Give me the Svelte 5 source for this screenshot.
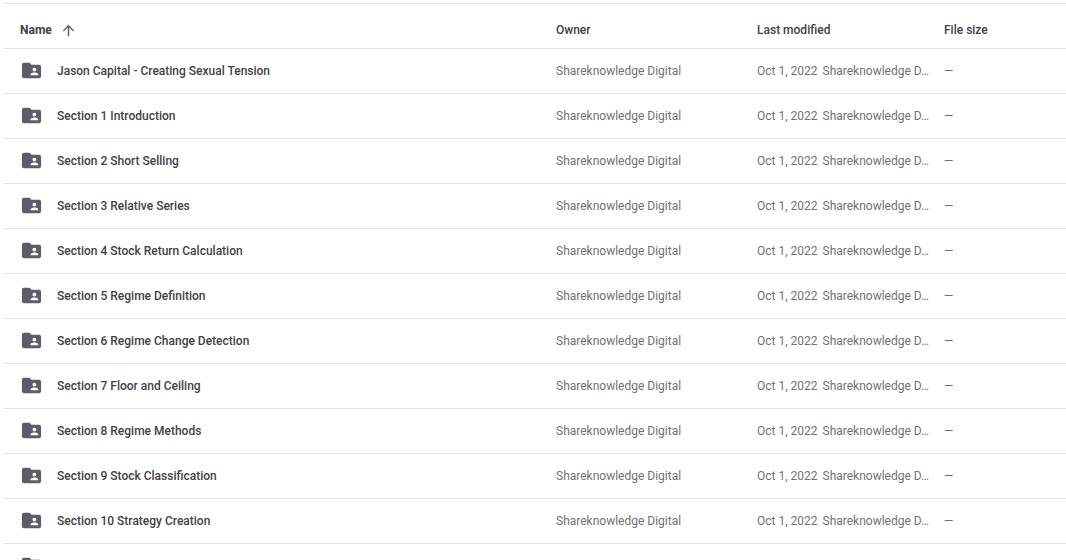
<script>
    const owner = 'Shareknowledge Digital';
    const modified = { date: 'Oct 1, 2022', by: 'Shareknowledge D…' };

    const names = [
        'Jason Capital - Creating Sexual Tension',
        'Section 1 Introduction',
        'Section 2 Short Selling',
        'Section 3 Relative Series',
        'Section 4 Stock Return Calculation',
        'Section 5 Regime Definition',
        'Section 6 Regime Change Detection',
        'Section 7 Floor and Ceiling',
        'Section 8 Regime Methods',
        'Section 9 Stock Classification',
        'Section 10 Strategy Creation'
    ];

    let ascending = $state(true);
    let rows = $derived(ascending ? names : [...names].reverse());

    function toggleSort() {
        ascending = !ascending;
    }
</script>

{#snippet folderIcon()}
    <svg class="folder-icon" viewBox="0 0 24 24" aria-hidden="true">
        <path d="M20 6h-8l-2-2H4c-1.1 0-1.99.9-1.99 2L2 18c0 1.1.9 2 2 2h16c1.1 0 2-.9 2-2V8c0-1.1-.9-2-2-2zm-5 3c1.1 0 2 .9 2 2s-.9 2-2 2-2-.9-2-2 .9-2 2-2zm4 8h-8v-1c0-1.33 2.67-2 4-2s4 .67 4 2v1z" />
    </svg>
{/snippet}

<main class="file-list">
    <table>
        <colgroup>
            <col>
            <col class="col-owner">
            <col class="col-modified">
            <col class="col-size">
        </colgroup>
        <thead>
            <tr>
                <th scope="col" aria-sort={ascending ? 'ascending' : 'descending'}>
                    <button class="sort-btn" onclick={toggleSort}>
                        Name
                        <svg class="sort-arrow" class:flipped={!ascending} viewBox="0 0 24 24" aria-hidden="true">
                            <path d="M4 12l1.41 1.41L11 7.83V20h2V7.83l5.58 5.59L20 12l-8-8-8 8z" />
                        </svg>
                    </button>
                </th>
                <th scope="col">Owner</th>
                <th scope="col">Last modified</th>
                <th scope="col">File size</th>
            </tr>
        </thead>
        <tbody>
            {#each rows as name (name)}
                <tr>
                    <td>
                        <div class="name-cell">
                            {@render folderIcon()}
                            <span class="name">{name}</span>
                        </div>
                    </td>
                    <td>{owner}</td>
                    <td>
                        <div class="modified-cell">
                            <span>{modified.date}</span>
                            <span>{modified.by}</span>
                        </div>
                    </td>
                    <td>—</td>
                </tr>
            {/each}
            <!-- next page, not loaded yet -->
            <tr>
                <td colspan="4">
                    <div class="name-cell">{@render folderIcon()}</div>
                </td>
            </tr>
        </tbody>
    </table>
</main>

<style>
    :global(body) { background: #fff; }

    .file-list {
        height: 100vh;
        overflow-y: auto;
        scrollbar-width: none;
        box-sizing: border-box;
        padding: 3px 0 0 4px;
        font-family: Roboto, Arial, sans-serif;
        font-size: 12px;
        line-height: 16px;
        color: #707174;
    }

    table {
        width: 100%;
        table-layout: fixed;
        border-collapse: separate;
        border-spacing: 0;
        border-top: 1px solid #e0e0e0;
    }
    .col-owner { width: 201px; }
    .col-modified { width: 187px; }
    .col-size { width: 122px; }

    th, td {
        box-sizing: border-box;
        height: 45px;
        padding: 0;
        border-bottom: 1px solid #e0e0e0;
        text-align: left;
        vertical-align: middle;
        white-space: nowrap;
    }
    th { font-weight: 500; color: #3f4145; padding-top: 8px; }
    td { padding-bottom: 1px; }
    th:first-child, td:first-child { padding-left: 16px; }

    .sort-btn {
        display: flex;
        align-items: center;
        gap: 8px;
        padding: 0;
        border: 0;
        background: none;
        font: inherit;
        font-weight: 700;
        color: inherit;
        cursor: pointer;
    }
    .sort-arrow { width: 17px; height: 17px; fill: #5f6368; }
    .flipped { transform: rotate(180deg); }

    .name-cell { display: flex; align-items: center; gap: 14px; }
    .folder-icon { width: 23px; height: 23px; fill: #5b5e69; flex-shrink: 0; }
    .name { font-weight: 500; color: #3f4145; }

    .modified-cell { display: flex; gap: 5px; }
</style>
